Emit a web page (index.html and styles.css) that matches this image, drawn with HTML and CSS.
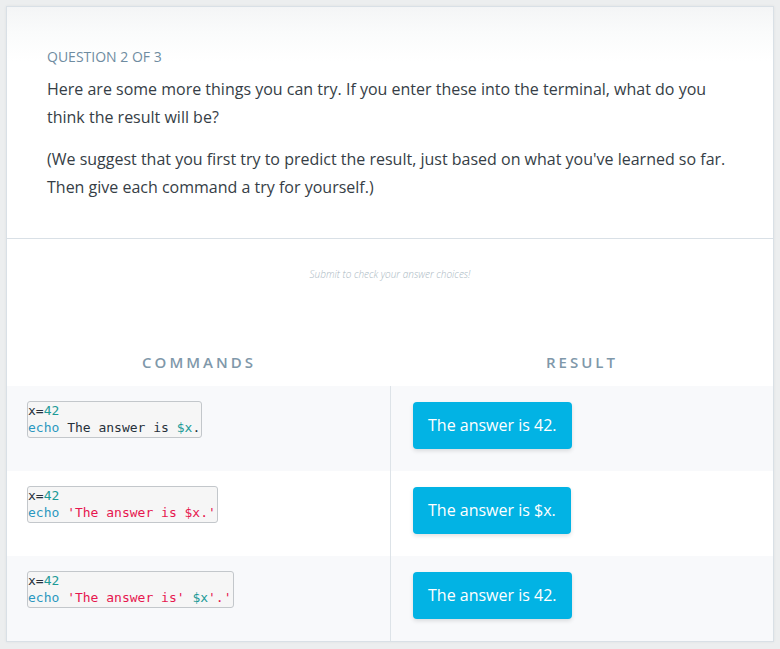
FILE: index.html
```html
<!DOCTYPE html>
<html>
<head>
<meta charset="utf-8">
<link rel="stylesheet" href="styles.css">
</head>
<body>
<div class="card">
  <div class="question">
    <div class="q-label">Question 2 of 3</div>
    <p class="q-text">Here are some more things you can try. If you enter these into the terminal, what do you think the result will be?</p>
    <p class="q-text">(We suggest that you first try to predict the result, just based on what you've learned so far. Then give each command a try for yourself.)</p>
  </div>
  <div class="answers">
    <div class="hint">Submit to check your answer choices!</div>
    <div class="table">
      <div class="th">Commands</div>
      <div class="th">Result</div>

      <div class="cell cmd shade"><pre class="code">x=<span class="num">42</span>
<span class="bi">echo</span> The answer is <span class="var">$x</span>.</pre></div>
      <div class="cell res shade"><span class="btn">The answer is 42.</span></div>

      <div class="cell cmd"><pre class="code">x=<span class="num">42</span>
<span class="bi">echo</span> <span class="str">'The answer is $x.'</span></pre></div>
      <div class="cell res"><span class="btn">The answer is $x.</span></div>

      <div class="cell cmd shade"><pre class="code">x=<span class="num">42</span>
<span class="bi">echo</span> <span class="str">'The answer is'</span> <span class="var">$x</span><span class="str">'.'</span></pre></div>
      <div class="cell res shade"><span class="btn">The answer is 42.</span></div>
    </div>
  </div>
</div>
</body>
</html>
```

FILE: styles.css
```css
html, body {
  margin: 0;
  padding: 0;
}
body {
  background: #eceeef;
  font-family: "Open Sans", "Liberation Sans", sans-serif;
  color: #3a434b;
  padding: 6px 6px 8px 6px;
}
.card {
  background: #fff;
  border: 1px solid #d9e0e6;
  box-shadow: 0 0 3px rgba(0,0,0,0.06);
}
.question {
  background: linear-gradient(#f4f5f6 0, #fafbfb 25px, #ffffff 55px);
  padding: 39px 40px 37px 40px;
  border-bottom: 1px solid #d9e0e6;
}
.q-label {
  font-size: 14px;
  line-height: 21px;
  text-transform: uppercase;
  color: #6f8ca1;
  margin-bottom: 8px;
}
.q-text {
  margin: 0 0 14px 0;
  font-size: 16px;
  line-height: 28px;
  color: #363e46;
}
.q-text:last-child {
  margin-bottom: 0;
}
.answers {
  padding-top: 28px;
}
.hint {
  text-align: center;
  font-size: 10px;
  line-height: 14px;
  font-style: italic;
  font-weight: 300;
  color: #a9b7c2;
  margin-bottom: 57px;
}
.table {
  display: grid;
  grid-template-columns: 384px 1fr;
}
.th {
  height: 48px;
  line-height: 48px;
  text-align: center;
  font-size: 15px;
  font-weight: 600;
  letter-spacing: 3px;
  text-transform: uppercase;
  color: #7f98aa;
}
.cell {
  height: 85px;
  box-sizing: border-box;
  padding-top: 15px;
  display: flex;
  align-items: flex-start;
}
.cell.shade {
  background: #f8f9fb;
}
.cmd {
  padding-left: 20px;
  border-right: 1px solid #dde3e8;
}
.res {
  padding-left: 22px;
  padding-top: 16px;
}
.code {
  margin: 0;
  font-family: "DejaVu Sans Mono", monospace;
  font-size: 13px;
  line-height: 17px;
  background: #f6f6f6;
  border: 1px solid #c3c7cb;
  border-radius: 3px;
  padding: 0 1px 1px 0;
  color: #26313b;
}
.num { color: #1b9a96; }
.bi { color: #2b98c0; }
.var { color: #1b9a96; }
.str { color: #e6174f; }
.btn {
  display: inline-block;
  background: #02b3e4;
  color: #fff;
  font-size: 16px;
  line-height: 47px;
  height: 47px;
  padding: 0 15px;
  border-radius: 4px;
  box-shadow: 0 2px 4px rgba(0,0,0,0.12);
}
```
